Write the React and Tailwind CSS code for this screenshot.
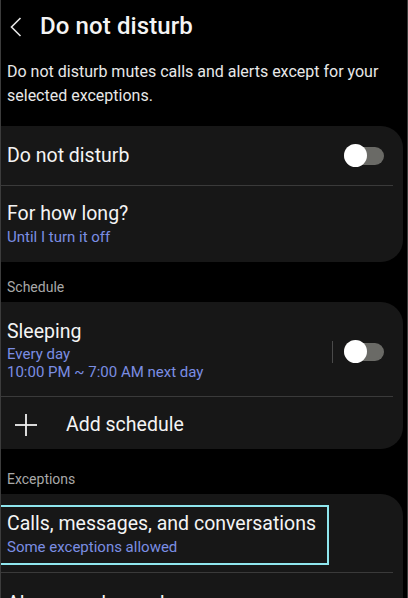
import React from "react";

const font = { fontFamily: "Roboto, 'Noto Sans', sans-serif" };

const Toggle = () => (
  <div className="relative w-[40px] h-[24px] flex items-center">
    <div className="w-full h-[18px] rounded-full bg-[#6a6a66]" />
    <div className="absolute left-0 top-0 w-[23px] h-[23px] rounded-full bg-white" />
  </div>
);

const Divider = () => <div className="h-px bg-[#3a3a3a] mr-[10px]" />;

export default function App() {
  return (
    <div
      className="w-[408px] h-[598px] overflow-hidden bg-black border-x border-[#3c3c3c] text-[#f4f4f4]"
      style={font}
    >
      {/* Header */}
      <div className="h-[52px] flex items-center">
        <svg
          width="12"
          height="20"
          viewBox="0 0 12 20"
          className="ml-[9px] mt-[1px]"
          fill="none"
          stroke="#e6e6e6"
          strokeWidth="1.6"
        >
          <polyline points="10.5,1 1.5,10 10.5,19" />
        </svg>
        <h1 className="ml-[18px] text-[24px] font-medium leading-none tracking-[0.1px]">
          Do not disturb
        </h1>
      </div>

      <p className="mt-[8px] px-[6px] text-[16px] leading-[24px] text-[#e8e8e8]">
        Do not disturb mutes calls and alerts except for your selected
        exceptions.
      </p>

      {/* Card 1 */}
      <div className="mt-[18px] mr-[4px] bg-[#171717] rounded-r-[22px]">
        <div className="h-[59px] flex items-center justify-between pl-[6px] pr-[19px]">
          <span className="text-[19.5px]">Do not disturb</span>
          <Toggle />
        </div>
        <Divider />
        <div className="h-[76px] flex flex-col justify-center pl-[6px]">
          <span className="text-[19.5px] leading-[26px]">For how long?</span>
          <span className="text-[15px] leading-[20px] text-[#7b8ee3]">
            Until I turn it off
          </span>
        </div>
      </div>

      {/* Schedule */}
      <div className="h-[40px] flex items-center pt-[10px] pl-[6px] text-[14px] text-[#a8a8a8]">
        Schedule
      </div>
      <div className="mr-[4px] bg-[#171717] rounded-r-[22px]">
        <div className="h-[94px] flex items-center justify-between pl-[6px] pr-[19px]">
          <div className="flex flex-col pt-[2px]">
            <span className="text-[19.5px] leading-[26px]">Sleeping</span>
            <span className="text-[15px] leading-[18px] text-[#7b8ee3]">
              Every day
            </span>
            <span className="text-[15px] leading-[18px] text-[#7b8ee3]">
              10:00 PM ~ 7:00 AM next day
            </span>
          </div>
          <div className="flex items-center gap-[11px] mt-[6px]">
            <div className="w-px h-[22px] bg-[#4a4a4a]" />
            <Toggle />
          </div>
        </div>
        <Divider />
        <div className="h-[52px] flex items-center pt-[4px]">
          <svg
            width="24"
            height="24"
            viewBox="0 0 24 24"
            className="ml-[13px]"
            stroke="#f0f0f0"
            strokeWidth="1.8"
          >
            <line x1="12" y1="1" x2="12" y2="23" />
            <line x1="1" y1="12" x2="23" y2="12" />
          </svg>
          <span className="ml-[28px] text-[19.5px]">Add schedule</span>
        </div>
      </div>

      {/* Exceptions */}
      <div className="h-[45px] flex items-center pt-[15px] pl-[6px] text-[14px] text-[#a8a8a8]">
        Exceptions
      </div>
      <div className="mr-[4px] bg-[#171717] rounded-r-[22px]">
        <div className="relative h-[78px] flex flex-col justify-center pl-[6px] pt-[2px]">
          <span className="text-[19.5px] leading-[26px]">
            Calls, messages, and conversations
          </span>
          <span className="text-[15px] leading-[20px] text-[#7b8ee3]">
            Some exceptions allowed
          </span>
          <div className="absolute left-[-3px] top-[11px] w-[331px] h-[60px] border-2 border-[#8fe6ee]" />
        </div>
        <Divider />
        <div className="h-[60px] pl-[6px] pt-[16px]">
          <span className="text-[19.5px]">Alarms and sounds</span>
        </div>
      </div>
    </div>
  );
}
